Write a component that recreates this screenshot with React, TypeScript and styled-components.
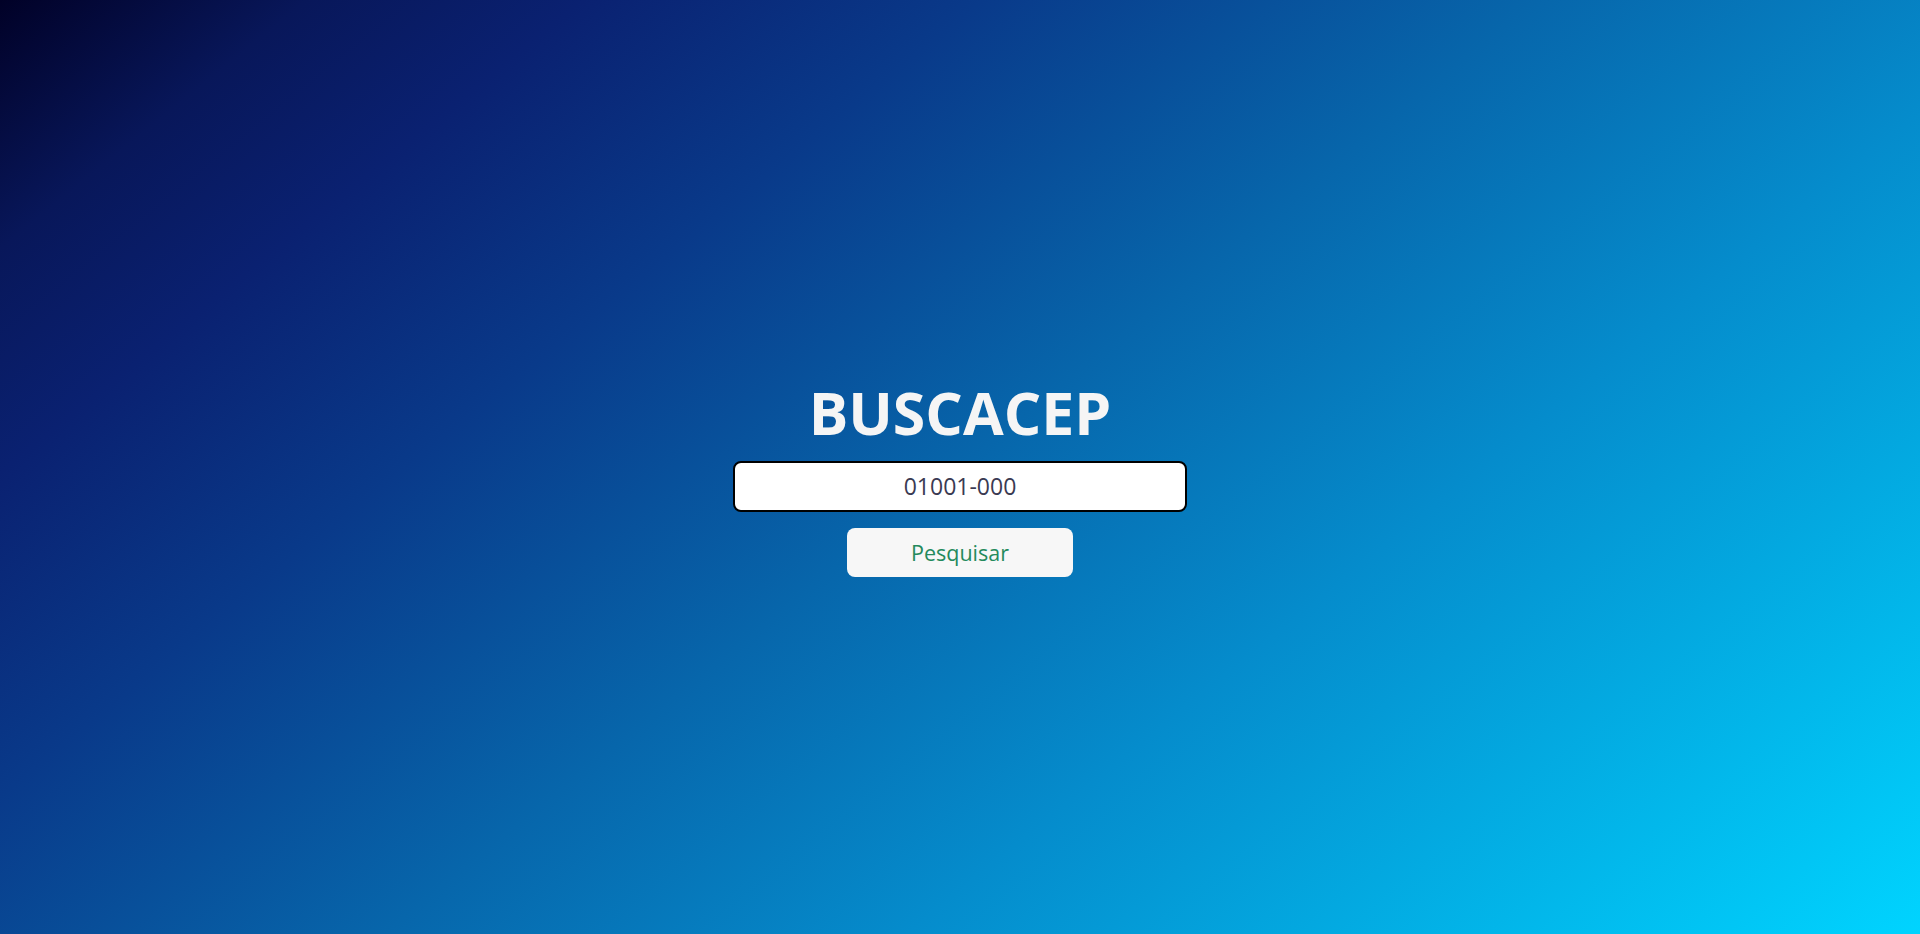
import React, { useState } from "react";
import styled, { createGlobalStyle } from "styled-components";

const GlobalStyle = createGlobalStyle`
  * { box-sizing: border-box; }
  html, body { margin: 0; padding: 0; height: 100%; }
  body { font-family: "Open Sans", "Noto Sans", sans-serif; }
  #root { height: 100%; }
`;

const Page = styled.main`
  min-height: 100vh;
  width: 100%;
  padding-top: 20px;
  display: flex;
  flex-direction: column;
  align-items: center;
  justify-content: center;
  background: linear-gradient(
    141deg,
    #010127 0%,
    #08175a 10%,
    #0a2171 19%,
    #093a8a 32%,
    #0766ab 50%,
    #058ccc 67%,
    #00d4ff 100%
  );
`;

const Title = styled.h1`
  margin: 0 0 13px;
  font-family: "Open Sans", "Noto Sans", sans-serif;
  font-weight: 700;
  font-size: 59px;
  line-height: 1.2;
  color: #f5f5f5;
  letter-spacing: 0;
`;

const CepInput = styled.input`
  width: 454px;
  height: 51px;
  border: 2px solid #000;
  border-radius: 8px;
  background: #fff;
  text-align: center;
  font-family: "Open Sans", "Noto Sans", sans-serif;
  font-size: 23px;
  color: #3a3a52;
  caret-color: #1e1e3c;
  outline: none;
  padding: 0 10px;
`;

const SearchButton = styled.button`
  margin-top: 16px;
  width: 226px;
  height: 49px;
  border: none;
  border-radius: 8px;
  background: #f7f7f7;
  color: #248a5c;
  font-family: "Open Sans", "Noto Sans", sans-serif;
  font-size: 21.5px;
  cursor: pointer;
`;

export default function App() {
  const [cep, setCep] = useState("01001-000");
  return (
    <>
      <GlobalStyle />
      <Page>
        <Title>BUSCACEP</Title>
        <CepInput
          type="text"
          value={cep}
          autoFocus
          onChange={(e) => setCep(e.target.value)}
        />
        <SearchButton type="button">Pesquisar</SearchButton>
      </Page>
    </>
  );
}
